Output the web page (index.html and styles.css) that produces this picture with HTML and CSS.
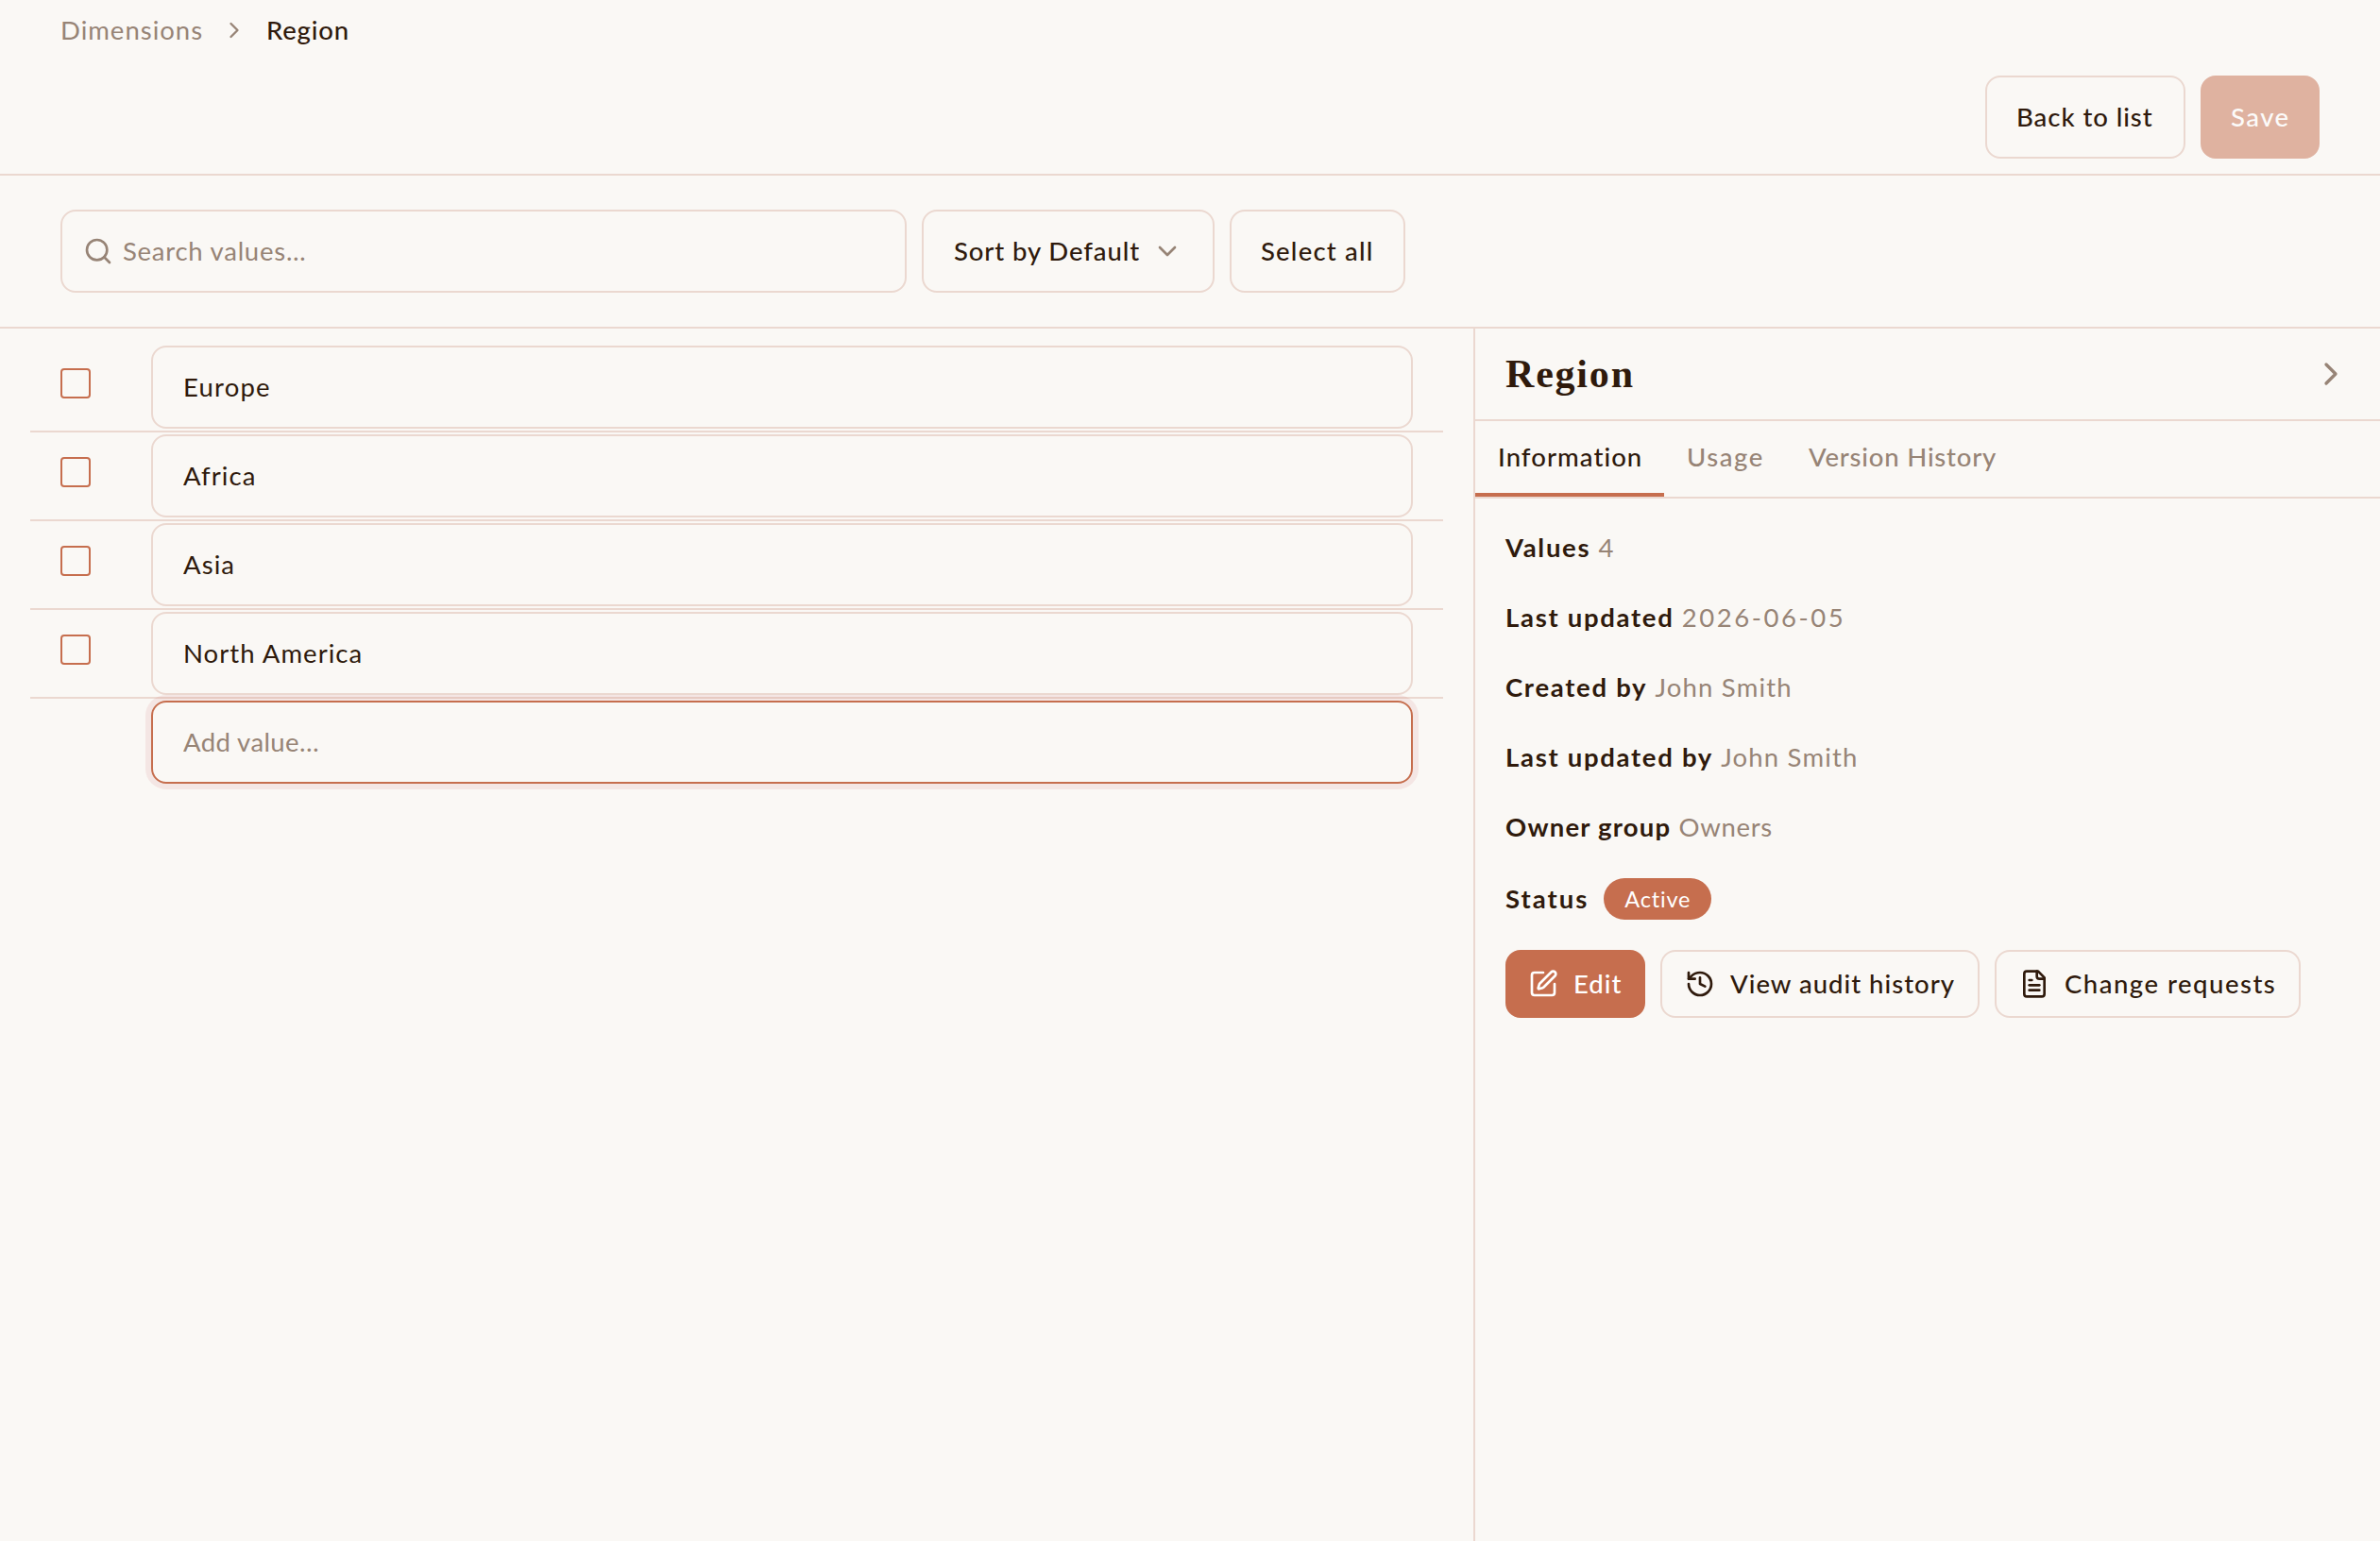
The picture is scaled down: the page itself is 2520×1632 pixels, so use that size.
FILE: index.html
```html
<!DOCTYPE html>
<html lang="en">
  <head>
    <meta charset="UTF-8" />
    <title>Region</title>
    <link rel="stylesheet" href="styles.css">
  </head>

  <body>
    <header class="header">
      <nav class="breadcrumb">
        <a class="breadcrumb__link">Dimensions</a>
        <svg class="icon icon--sm" viewBox="0 0 24 24"><path d="m9 18 6-6-6-6" /></svg>
        <span class="breadcrumb__current">Region</span>
      </nav>
      <div class="header__actions">
        <button class="btn btn--back">Back to list</button>
        <button class="btn btn--primary btn--save" disabled>Save</button>
      </div>
    </header>

    <div class="toolbar">
      <label class="search">
        <svg class="icon" viewBox="0 0 24 24"><circle cx="11" cy="11" r="8" /><path d="m21 21-4.3-4.3" /></svg>
        <input class="search__input" type="text" placeholder="Search values…" />
      </label>
      <button class="btn btn--sort">
        <span>Sort by Default</span>
        <svg class="icon icon--muted" viewBox="0 0 24 24"><path d="m6 9 6 6 6-6" /></svg>
      </button>
      <button class="btn btn--select">Select all</button>
    </div>

    <main class="main">
      <section class="values">
        <div class="values__row">
          <input class="checkbox" type="checkbox" />
          <input class="field field--europe" type="text" value="Europe" />
        </div>
        <div class="values__row">
          <input class="checkbox" type="checkbox" />
          <input class="field" type="text" value="Africa" />
        </div>
        <div class="values__row">
          <input class="checkbox" type="checkbox" />
          <input class="field" type="text" value="Asia" />
        </div>
        <div class="values__row">
          <input class="checkbox" type="checkbox" />
          <input class="field" type="text" value="North America" />
        </div>
        <div class="values__row values__row--new">
          <input class="field field--active" type="text" placeholder="Add value…" />
        </div>
      </section>

      <aside class="panel">
        <div class="panel__head">
          <h2 class="panel__title">Region</h2>
          <svg class="icon icon--lg" viewBox="0 0 24 24"><path d="m9 18 6-6-6-6" /></svg>
        </div>
        <div class="tabs">
          <button class="tab tab--info tab--active">Information</button>
          <button class="tab tab--usage">Usage</button>
          <button class="tab tab--history">Version History</button>
        </div>
        <div class="info">
          <p class="info__row"><b class="info__label">Values</b> <span>4</span></p>
          <p class="info__row"><b class="info__label">Last updated</b> <span class="info__date">2026-06-05</span></p>
          <p class="info__row"><b class="info__label">Created by</b> <span class="info__name">John Smith</span></p>
          <p class="info__row"><b class="info__label">Last updated by</b> <span class="info__name">John Smith</span></p>
          <p class="info__row"><b class="info__label info__label--owner">Owner group</b> <span class="info__owner">Owners</span></p>
          <p class="info__row info__row--status"><b class="info__label info__label--status">Status</b> <span class="badge">Active</span></p>
          <div class="info__actions">
            <button class="btn btn--sm btn--primary btn--edit">
              <svg class="icon" viewBox="0 0 24 24"><path d="M12 3H5a2 2 0 0 0-2 2v14a2 2 0 0 0 2 2h14a2 2 0 0 0 2-2v-7" /><path d="M18.375 2.625a1 1 0 0 1 3 3l-9.013 9.014a2 2 0 0 1-.853.505l-2.873.84a.5.5 0 0 1-.62-.62l.84-2.873a2 2 0 0 1 .506-.852z" /></svg>
              <span>Edit</span>
            </button>
            <button class="btn btn--sm btn--audit">
              <svg class="icon" viewBox="0 0 24 24"><path d="M3 12a9 9 0 1 0 9-9 9.75 9.75 0 0 0-6.74 2.74L3 8" /><path d="M3 3v5h5" /><path d="M12 7v5l4 2" /></svg>
              <span>View audit history</span>
            </button>
            <button class="btn btn--sm btn--requests">
              <svg class="icon" viewBox="0 0 24 24"><path d="M15 2H6a2 2 0 0 0-2 2v16a2 2 0 0 0 2 2h12a2 2 0 0 0 2-2V7Z" /><path d="M14 2v4a2 2 0 0 0 2 2h4" /><path d="M10 9H8" /><path d="M16 13H8" /><path d="M16 17H8" /></svg>
              <span>Change requests</span>
            </button>
          </div>
        </div>
      </aside>
    </main>
  </body>
</html>
```
FILE: styles.css
```css
:root {
  --bg: #faf8f5;
  --text: #2f1a0c;
  --muted: #978476;
  --border: #ebd8d0;
  --primary: #c66e4e;
}

* {
  box-sizing: border-box;
}

body {
  margin: 0;
  height: 100vh;
  display: flex;
  flex-direction: column;
  overflow: hidden;
  background-color: var(--bg);
  color: var(--text);
  font-family: "Lato", sans-serif;
  font-size: 27.5px;
  line-height: 42px;
  letter-spacing: 1.05px;
}

button,
input {
  margin: 0;
  font: inherit;
  letter-spacing: inherit;
  color: inherit;
}

.icon {
  flex: none;
  width: 32px;
  height: 32px;
  fill: none;
  stroke: currentColor;
  stroke-width: 2;
  stroke-linecap: round;
  stroke-linejoin: round;
}

.icon--sm {
  width: 28px;
  height: 28px;
}

.icon--lg {
  width: 40px;
  height: 40px;
  color: var(--muted);
}

.icon--muted {
  color: var(--muted);
}

/* header */
.header {
  height: 186px;
  padding: 10px 64px 0;
  border-bottom: 2px solid var(--border);
}

.breadcrumb {
  display: flex;
  align-items: center;
  gap: 20px;
  height: 44px;
  color: var(--muted);
}

.breadcrumb__link {
  width: 150px;
  letter-spacing: 1px;
}

.breadcrumb__current {
  font-weight: 500;
  color: var(--text);
  letter-spacing: 0.8px;
}

.header__actions {
  display: flex;
  justify-content: flex-end;
  gap: 16px;
  margin-top: 26px;
}

/* buttons */
.btn {
  display: flex;
  align-items: center;
  height: 88px;
  padding: 0 31px;
  border: 2px solid var(--border);
  border-radius: 16px;
  background-color: transparent;
  color: var(--text);
  font-weight: 500;
  white-space: nowrap;
}

.btn--primary {
  border-color: var(--primary);
  background-color: var(--primary);
  color: #fff;
}

.btn--primary:disabled {
  opacity: 0.5;
}

.btn--back {
  width: 212px;
  letter-spacing: 0.95px;
}

.btn--save {
  width: 126px;
  padding: 0 30px;
  letter-spacing: 1.5px;
}

.btn--sort {
  justify-content: space-between;
  width: 310px;
  padding: 0 32px;
  letter-spacing: 0.9px;
}

.btn--select {
  width: 186px;
  letter-spacing: 1.2px;
}

.btn--sm {
  gap: 16px;
  height: 72px;
  padding: 0 24px;
}

.btn--edit {
  width: 148px;
  padding: 0 22px;
}

.btn--audit {
  width: 338px;
  letter-spacing: 1px;
}

.btn--requests {
  width: 324px;
  letter-spacing: 1.5px;
}

/* toolbar */
.toolbar {
  display: flex;
  align-items: center;
  gap: 16px;
  height: 162px;
  padding: 0 64px;
  border-bottom: 2px solid var(--border);
}

.search {
  display: flex;
  align-items: center;
  gap: 10px;
  width: 896px;
  height: 88px;
  padding: 0 22px;
  border: 2px solid var(--border);
  border-radius: 16px;
  color: var(--muted);
  letter-spacing: 0.75px;
}

.search__input {
  flex: 1;
  padding: 0;
  border: none;
  outline: none;
  background-color: transparent;
}

::placeholder {
  color: var(--muted);
  opacity: 1;
}

/* main */
.main {
  flex: 1;
  display: flex;
}

.values {
  width: 1560px;
  padding: 16px 32px 0;
}

.values__row {
  display: flex;
  align-items: flex-start;
  justify-content: space-between;
  padding: 2px 32px;
  border-bottom: 2px solid var(--border);
}

.values__row--new {
  justify-content: flex-end;
  border-bottom: none;
}

.checkbox {
  appearance: none;
  width: 32px;
  height: 32px;
  margin-top: 24px;
  border: 2px solid var(--primary);
  border-radius: 4px;
}

.field {
  width: 1336px;
  height: 88px;
  padding: 0 32px 2px;
  border: 2px solid var(--border);
  border-radius: 16px;
  outline: none;
  background-color: transparent;
}

.field--europe {
  letter-spacing: 1.2px;
}

.field--active {
  border-color: var(--primary);
  box-shadow: 0 0 0 6px rgba(198, 78, 78, 0.1);
  letter-spacing: 0.4px;
}

/* side panel */
.panel {
  flex: 1;
  border-left: 2px solid var(--border);
}

.panel__head {
  display: flex;
  align-items: center;
  justify-content: space-between;
  height: 98px;
  padding: 0 32px;
  border-bottom: 2px solid var(--border);
}

.panel__title {
  margin: 0;
  font-family: "Liberation Serif", serif;
  font-size: 42px;
  letter-spacing: 1.8px;
}

.tabs {
  display: flex;
  height: 82px;
  border-bottom: 2px solid var(--border);
}

.tab {
  padding: 0 24px;
  border: none;
  border-bottom: 4px solid transparent;
  background-color: transparent;
  color: var(--muted);
  font-weight: 500;
  text-align: left;
  white-space: nowrap;
}

.tab--info {
  width: 200px;
}

.tab--usage {
  width: 128px;
  letter-spacing: 1.6px;
}

.tab--history {
  width: 250px;
  padding-left: 25px;
  letter-spacing: 0.8px;
}

.tab--active {
  border-bottom-color: var(--primary);
  color: var(--text);
}

.info {
  padding: 31px 32px 0;
  color: var(--muted);
}

.info__row {
  margin: 0 0 32px;
}

.info__label {
  color: var(--text);
  font-weight: 700;
  letter-spacing: 1.7px;
}

.info__label--owner {
  letter-spacing: 1.2px;
}

.info__label--status {
  letter-spacing: 2px;
}

.info__date {
  letter-spacing: 2.55px;
}

.info__name {
  letter-spacing: 1.2px;
}

.info__owner {
  letter-spacing: 0.7px;
}

.info__row--status {
  display: flex;
  align-items: center;
  gap: 16px;
  height: 44px;
  margin-top: 33px;
}

.badge {
  height: 44px;
  padding: 0 22px;
  border-radius: 22px;
  background-color: var(--primary);
  color: #fff;
  font-size: 23.5px;
  line-height: 44px;
  letter-spacing: 0.8px;
}

.info__actions {
  display: flex;
  gap: 16px;
}
```
